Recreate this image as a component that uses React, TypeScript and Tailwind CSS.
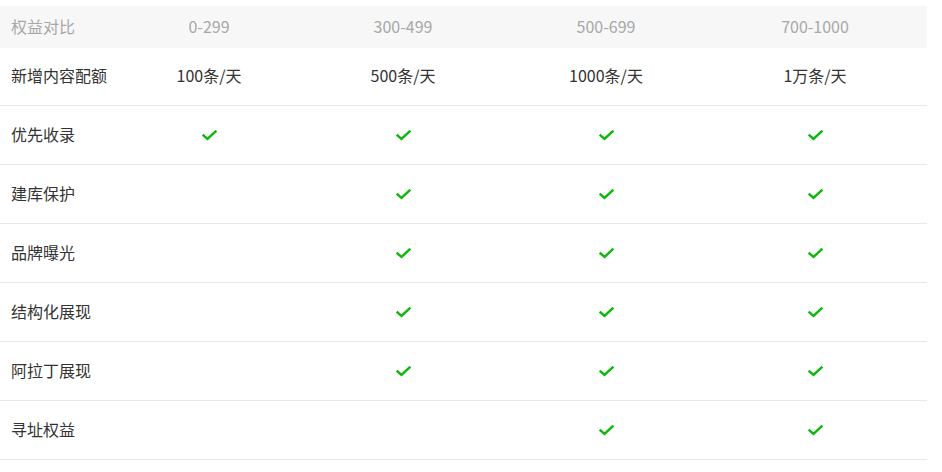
import React from "react";

const cols = "grid grid-cols-[121px_176px_212px_194px_224px]";

const Check = () => (
  <svg width="15" height="11" viewBox="0 0 15 11" className="block">
    <path d="M1.5 5.5 L5.5 9 L13.5 1.5" fill="none" stroke="#0cb80a" strokeWidth="2.4" strokeLinecap="square" />
  </svg>
);

const rows: { label: string; cells: boolean[] }[] = [
  { label: "优先收录", cells: [true, true, true, true] },
  { label: "建库保护", cells: [false, true, true, true] },
  { label: "品牌曝光", cells: [false, true, true, true] },
  { label: "结构化展现", cells: [false, true, true, true] },
  { label: "阿拉丁展现", cells: [false, true, true, true] },
  { label: "寻址权益", cells: [false, false, true, true] },
];

export default function App() {
  return (
    <div
      className="w-[942px] h-[472px] bg-white pt-[6px] text-[16px] leading-[20px]"
      style={{ fontFamily: '"Noto Sans CJK SC", "Noto Sans", sans-serif' }}
    >
      <div className="w-[927px]">
        <div className={`${cols} h-[42px] items-center pb-[3px] bg-[#f7f7f7] text-[#a8a8a8]`}>
          <div className="pl-[11px]">权益对比</div>
          <div className="text-center">0-299</div>
          <div className="text-center">300-499</div>
          <div className="text-center">500-699</div>
          <div className="text-center">700-1000</div>
        </div>
        <div className={`${cols} h-[58px] items-center pb-[3px] border-b border-[#e8e8e8] text-[#333333]`}>
          <div className="pl-[11px]">新增内容配额</div>
          <div className="text-center">100条/天</div>
          <div className="text-center">500条/天</div>
          <div className="text-center">1000条/天</div>
          <div className="text-center">1万条/天</div>
        </div>
        {rows.map((r) => (
          <div key={r.label} className={`${cols} h-[59px] items-center border-b border-[#e8e8e8] text-[#333333]`}>
            <div className="pl-[11px] pb-[2px]">{r.label}</div>
            {r.cells.map((c, i) => (
              <div key={i} className="flex justify-center">
                {c ? <Check /> : null}
              </div>
            ))}
          </div>
        ))}
      </div>
    </div>
  );
}
